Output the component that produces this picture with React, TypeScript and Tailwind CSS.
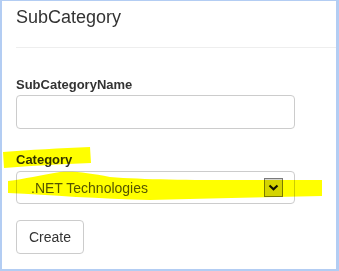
import React from "react";

function Chevron() {
  return (
    <svg width="11" height="7" viewBox="0 0 11 7" className="block">
      <path d="M1.5 1.5 L5.5 5.2 L9.5 1.5" fill="none" stroke="#111" strokeWidth="2.2" />
    </svg>
  );
}

export default function App() {
  return (
    <div className="relative w-[339px] h-[271px] bg-white border-t border-l-2 border-r-[3px] border-b-2 border-[#b3cdf3] font-['Liberation_Sans',Arial,sans-serif] text-[#333]">
      <div className="pl-[14px] pt-[6px]">
        <h1 className="text-[18px] leading-[20px]">SubCategory</h1>
        <hr className="mt-[20px] border-0 border-t border-[#eeeeee]" />

        <div className="mt-[27px] text-[13px] leading-[20px] font-bold">SubCategoryName</div>
        <div className="w-[279px] h-[34px] border border-[#cccccc] rounded-[4px]" />

        <div className="mt-[21px] text-[13px] leading-[20px] font-bold">Category</div>
        <div className="mt-[1px] w-[279px] h-[33px] border border-[#cccccc] rounded-[4px] flex items-center pl-[14px] pr-[11px]">
          <span className="flex-1 text-[14px] leading-[20px] text-[#555]">.NET Technologies</span>
          <div className="w-[19px] h-[19px] border border-[#7a7a7a] bg-[#d4d4d4] flex items-center justify-center">
            <Chevron />
          </div>
        </div>

        <button className="mt-[16px] h-[34px] px-[12px] border border-[#cccccc] rounded-[4px] bg-white text-[14px] leading-[20px] text-[#333]">
          Create
        </button>
      </div>

      <svg
        className="absolute left-[-2px] top-[-1px] w-[339px] h-[271px] pointer-events-none mix-blend-multiply"
        viewBox="0 0 339 271"
      >
        <path
          d="M3 152 C30 150 60 148 90 147 L91 163 C60 164 30 166 4 168 Z"
          fill="#ffff00"
        />
        <path
          d="M8 181 C25 179 40 175 60 172 C75 171 90 173 110 177 C160 181 240 180 322 180 L322 196 C260 197 200 199 150 200 C100 199 50 195 8 193 Z"
          fill="#ffff00"
        />
      </svg>
    </div>
  );
}
